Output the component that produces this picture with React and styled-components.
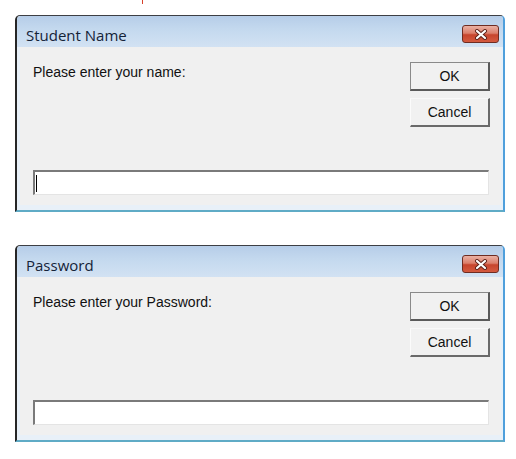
import React from 'react';
import styled, { createGlobalStyle } from 'styled-components';

const GlobalStyle = createGlobalStyle`
  html, body {
    margin: 0;
    padding: 0;
    background: #ffffff;
  }
`;

const Page = styled.div`
  width: 516px;
  height: 459px;
  display: flex;
  flex-direction: column;
  gap: 33px;
  padding: 0 0 0 15px;
  box-sizing: border-box;
`;

const TopStrip = styled.div`
  height: 15px;
  margin-bottom: -33px;
  padding-left: 127px;
  display: flex;
  align-items: flex-start;
`;

const RedTick = styled.span`
  display: block;
  width: 1px;
  height: 4px;
  background: #d8402a;
`;

const Dialog = styled.div`
  width: 490px;
  height: 197px;
  box-sizing: border-box;
  display: flex;
  flex-direction: column;
  border-top: 1px solid #3d3f44;
  border-left: 2px solid #262626;
  border-right: 2px solid #4f9fdc;
  border-bottom: 2px solid #5fabc6;
  border-radius: 5px 5px 0 0;
  background: #e8f0f8;
`;

const TitleBar = styled.div`
  height: 31px;
  flex: none;
  display: flex;
  align-items: flex-start;
  justify-content: space-between;
  padding: 0 4px 0 9px;
  border-radius: 4px 4px 0 0;
  background: linear-gradient(#b6cde8 0%, #c3d8ee 40%, #d2e2f3 100%);
`;

const Title = styled.span`
  font-family: "Open Sans", "Noto Sans", sans-serif;
  font-size: 15px;
  line-height: 20px;
  margin-top: 9px;
  color: #142338;
`;

const CloseButton = styled.div`
  width: 37px;
  height: 18px;
  margin-top: 9px;
  box-sizing: border-box;
  border: 1px solid #6e2c22;
  border-radius: 3px;
  background: linear-gradient(#eab1a4 0%, #dc7f6b 45%, #c7452d 55%, #d45a3f 100%);
  display: flex;
  align-items: center;
  justify-content: center;
`;

const Body = styled.div`
  flex: 1;
  margin: 0 2px 5px 3px;
  background: #f0f0f0;
  display: grid;
  grid-template-columns: 1fr 80px;
  grid-template-rows: auto 1fr 25px;
  padding: 15px 11px 10px 13px;
`;

const Prompt = styled.div`
  grid-row: 1;
  grid-column: 1;
  font-family: "Liberation Sans", Arial, sans-serif;
  font-size: 14px;
  line-height: 18px;
  color: #111;
  padding-top: 1px;
`;

const ButtonStack = styled.div`
  grid-row: 1;
  grid-column: 2;
  display: flex;
  flex-direction: column;
  gap: 7px;
`;

const Button = styled.div`
  height: 29px;
  box-sizing: border-box;
  display: flex;
  align-items: center;
  justify-content: center;
  font-family: "Liberation Sans", Arial, sans-serif;
  font-size: 14px;
  color: #111;
  background: #f1f1f1;
  border-style: solid;
  border-width: 1px 2px 2px 1px;
  border-color: ${(p) =>
    p.$default ? '#8a8a8a #5a5a5a #5a5a5a #8a8a8a' : '#f8f8f8 #6a6a6a #6a6a6a #fbfbfb'};
`;

const TextBox = styled.div`
  grid-row: 3;
  grid-column: 1 / span 2;
  height: 25px;
  margin-right: 1px;
  box-sizing: border-box;
  background: #ffffff;
  border-top: 2px solid #7a7a7a;
  border-left: 2px solid #7a7a7a;
  border-right: 1px solid #e4e4e4;
  border-bottom: 1px solid #e4e4e4;
  display: flex;
  align-items: center;
  padding-left: 1px;
`;

const Caret = styled.span`
  display: block;
  width: 1px;
  height: 17px;
  background: #000;
`;

function CloseGlyph() {
  return (
    <svg width="14" height="11" viewBox="0 0 14 11">
      <path d="M3 2 L11 9 M11 2 L3 9" stroke="#5b2018" strokeWidth="4" strokeLinecap="round" />
      <path d="M3 2 L11 9 M11 2 L3 9" stroke="#ffffff" strokeWidth="2.2" strokeLinecap="round" />
    </svg>
  );
}

function InputDialog({ title, prompt, focused }) {
  return (
    <Dialog>
      <TitleBar>
        <Title>{title}</Title>
        <CloseButton>
          <CloseGlyph />
        </CloseButton>
      </TitleBar>
      <Body>
        <Prompt>{prompt}</Prompt>
        <ButtonStack>
          <Button $default>OK</Button>
          <Button>Cancel</Button>
        </ButtonStack>
        <TextBox>{focused && <Caret />}</TextBox>
      </Body>
    </Dialog>
  );
}

export default function App() {
  return (
    <>
      <GlobalStyle />
      <Page>
        <TopStrip>
          <RedTick />
        </TopStrip>
        <InputDialog title="Student Name" prompt="Please enter your name:" focused />
        <InputDialog title="Password" prompt="Please enter your Password:" />
      </Page>
    </>
  );
}
